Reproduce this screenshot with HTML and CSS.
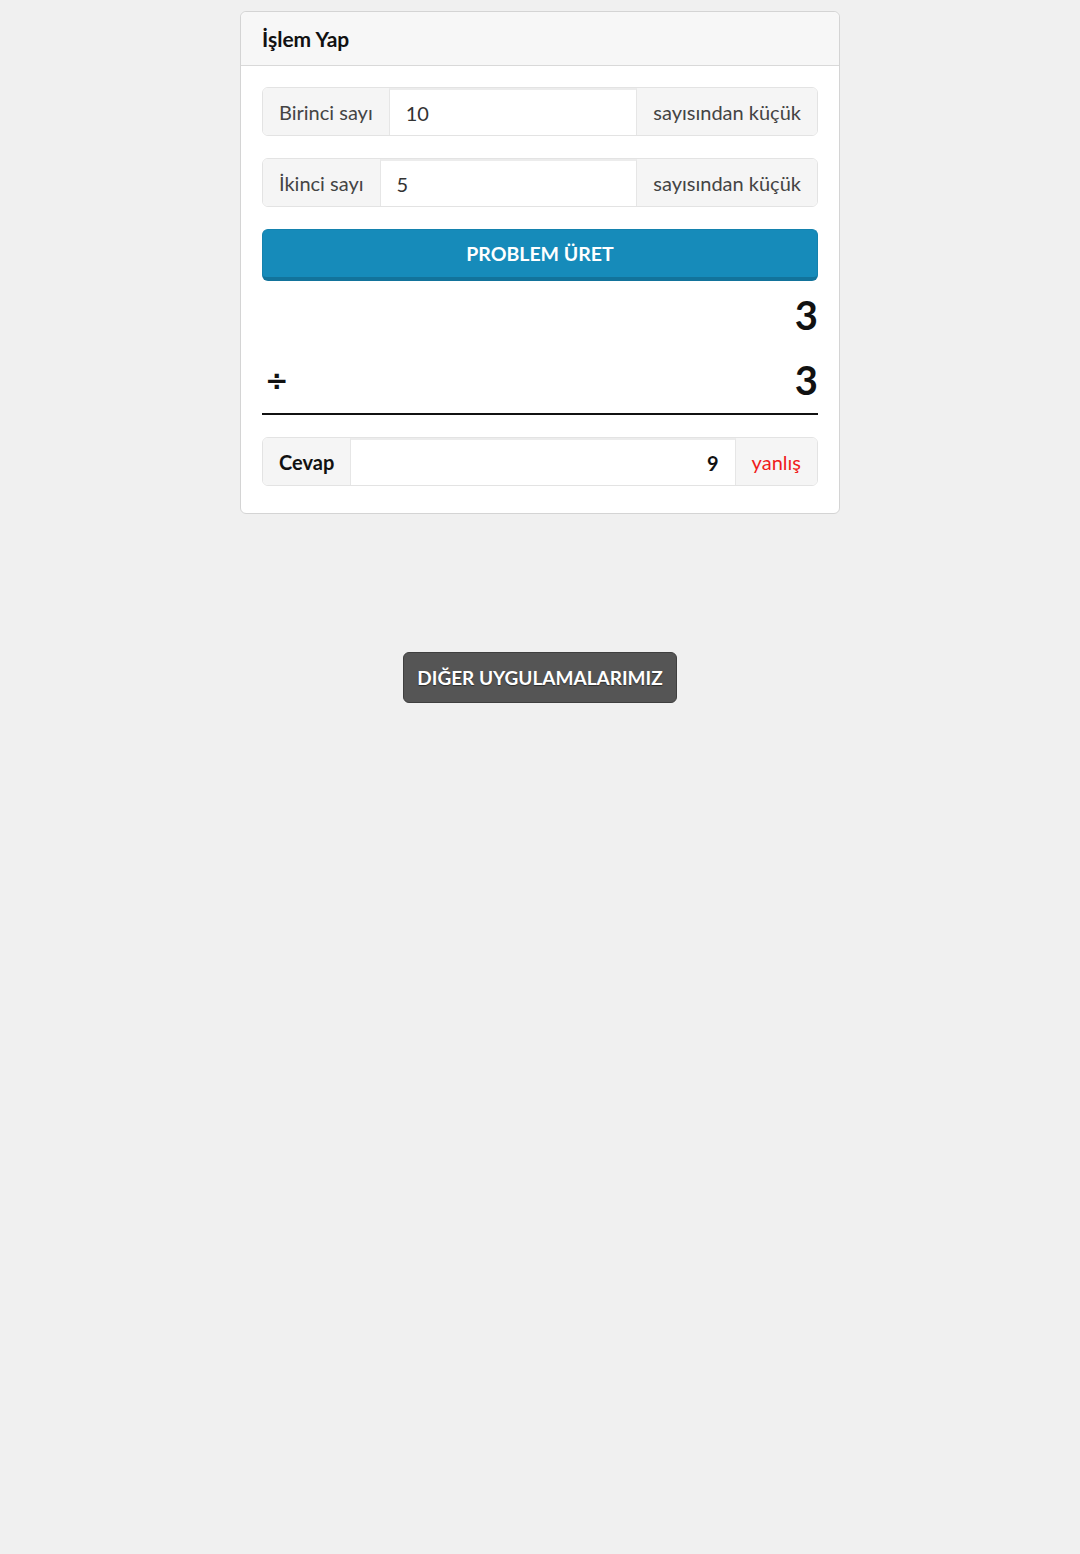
FILE: index.html
```html
<!DOCTYPE html>
<html lang="tr">
<head>
<meta charset="utf-8">
<title>İşlem Yap</title>
<link rel="stylesheet" href="styles.css">
</head>
<body>
<main class="page">
  <section class="card">
    <header class="card-header">İşlem Yap</header>
    <div class="card-body">
      <div class="input-group">
        <span class="addon">Birinci sayı</span>
        <span class="field">10</span>
        <span class="addon">sayısından küçük</span>
      </div>
      <div class="input-group">
        <span class="addon">İkinci sayı</span>
        <span class="field">5</span>
        <span class="addon">sayısından küçük</span>
      </div>
      <button class="btn-primary">PROBLEM ÜRET</button>
      <div class="problem">
        <div class="row"><span class="op"></span><span class="num">3</span></div>
        <div class="row"><span class="op">÷</span><span class="num">3</span></div>
        <div class="rule"></div>
      </div>
      <div class="input-group answer">
        <span class="addon bold">Cevap</span>
        <span class="field right bold">9</span>
        <span class="addon wrong">yanlış</span>
      </div>
    </div>
  </section>
  <div class="more">
    <button class="btn-dark">DIĞER UYGULAMALARIMIZ</button>
  </div>
</main>
</body>
</html>
```
FILE: styles.css
```css
* { box-sizing: border-box; }
body {
  margin: 0;
  background: #f0f0f0;
  font-family: "Lato", "Noto Sans", sans-serif;
  color: #333;
}
.page {
  width: 600px;
  margin: 11px auto 0;
}
.card {
  background: #fff;
  border: 1px solid #d4d4d4;
  border-radius: 6px;
}
.card-header {
  height: 54px;
  background: #f7f7f7;
  border-bottom: 1px solid #d9d9d9;
  border-radius: 6px 6px 0 0;
  padding: 0 21px;
  display: flex;
  align-items: center;
  font-weight: 700;
  font-size: 21px;
  color: #111;
}
.card-body {
  padding: 21px 21px 27px;
}
.input-group {
  display: flex;
  height: 49px;
  border: 1px solid #e3e3e3;
  border-radius: 6px;
  margin-bottom: 22px;
  font-size: 20px;
  overflow: hidden;
}
.addon {
  background: #f5f5f5;
  display: flex;
  align-items: center;
  padding: 0 16px;
  color: #444;
  white-space: nowrap;
}
.field {
  flex: 1;
  background: #fff;
  border-left: 1px solid #e6e6e6;
  border-right: 1px solid #e6e6e6;
  border-top: 2px solid #ececec;
  display: flex;
  align-items: center;
  padding: 0 16px;
  color: #333;
}
.field.right { justify-content: flex-end; }
.bold { font-weight: 700; color: #111; }
.wrong { color: #f01c1c; }
.answer { margin-bottom: 0; }
.btn-primary {
  display: block;
  width: 100%;
  height: 52px;
  border: 1px solid #1482ae;
  border-bottom: 4px solid #12739b;
  border-radius: 6px;
  background: #168bba;
  color: #fff;
  font-family: inherit;
  font-weight: 700;
  font-size: 19.5px;
}
.problem {
  padding-top: 14px;
  margin-bottom: 22px;
}
.row {
  display: flex;
  justify-content: space-between;
  align-items: center;
  height: 40px;
  font-weight: 700;
  font-size: 40px;
  color: #111;
}
.row + .row { margin-top: 25px; }
.op {
  font-family: "DejaVu Sans", sans-serif;
  font-size: 28px;
  padding-left: 3px;
}
.rule {
  height: 2px;
  background: #111;
  margin-top: 13px;
}
.more {
  display: flex;
  justify-content: center;
  padding-top: 138px;
}
.btn-dark {
  height: 51px;
  padding: 0 13px;
  background: #555;
  border: 1px solid #3f3f3f;
  border-radius: 6px;
  color: #fff;
  font-family: inherit;
  font-weight: 700;
  font-size: 19px;
  text-shadow: 0 1px 1px rgba(0,0,0,.5);
}
```
